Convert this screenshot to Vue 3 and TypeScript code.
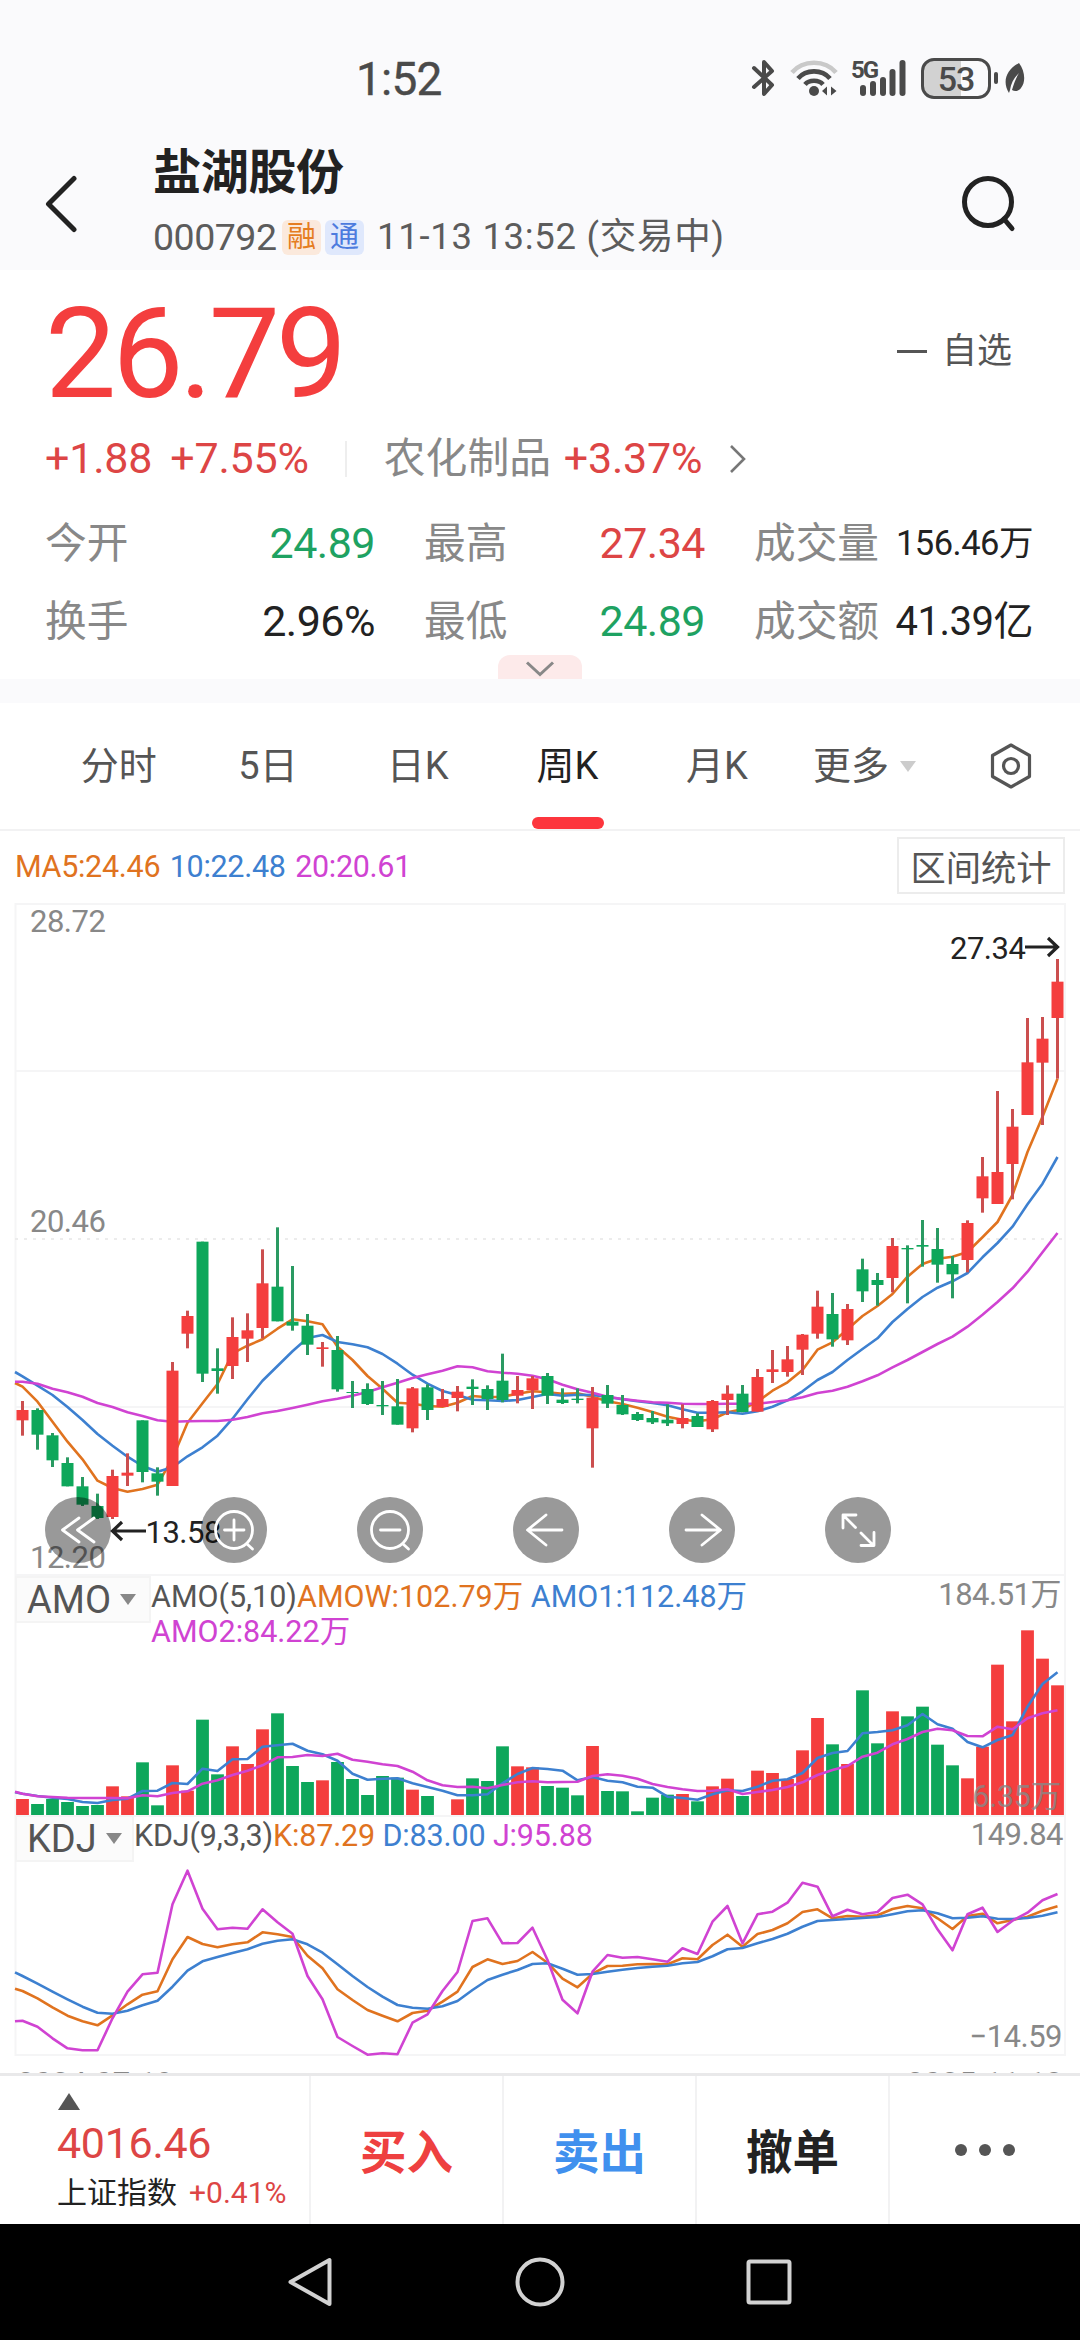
<script setup lang="ts">
type Candle = [up: 0 | 1, high: number, top: number, bottom: number, low: number]

const STEP = 15
const FIRST = 22.5
const UNIT = 3

// Weekly candles, in thirds of a pixel measured from the y = 1180 guide
const candles: Candle[] = [
  [1, 663, 690, 721, 767], [0, 685, 690, 764, 809], [0, 759, 766, 841, 861], [0, 832, 849, 919, 919],
  [0, 891, 919, 974, 978], [0, 941, 978, 1014, 1017], [1, 869, 888, 1011, 1017], [1, 820, 878, 887, 918],
  [0, 721, 721, 876, 907], [0, 862, 880, 905, 947], [1, 546, 572, 918, 918], [1, 392, 408, 461, 505],
  [0, 185, 185, 581, 606], [0, 505, 565, 573, 641], [1, 412, 471, 558, 597], [1, 400, 451, 476, 546],
  [1, 208, 310, 444, 475], [0, 142, 320, 424, 424], [0, 258, 425, 437, 452], [0, 402, 437, 494, 525],
  [1, 486, 502, 507, 560], [0, 468, 510, 628, 635], [0, 603, 636, 638, 684], [0, 610, 627, 672, 675],
  [0, 603, 675, 679, 705], [0, 597, 679, 734, 734], [1, 621, 625, 745, 757], [0, 613, 622, 690, 720],
  [1, 627, 657, 681, 681], [1, 618, 635, 654, 694], [0, 598, 620, 627, 675], [0, 616, 627, 657, 690],
  [0, 521, 602, 660, 667], [1, 588, 630, 647, 670], [1, 588, 595, 631, 687], [0, 579, 588, 647, 672],
  [0, 625, 659, 669, 672], [0, 625, 656, 660, 670], [1, 621, 653, 745, 863], [0, 615, 645, 671, 684],
  [0, 645, 675, 703, 705], [0, 696, 702, 720, 723], [0, 693, 714, 727, 732], [0, 673, 719, 730, 738],
  [1, 673, 714, 732, 745], [0, 700, 708, 741, 741], [1, 660, 663, 748, 756], [1, 616, 641, 660, 705],
  [0, 615, 641, 696, 697], [1, 567, 591, 695, 695], [1, 510, 568, 576, 609], [1, 498, 538, 576, 590],
  [1, 462, 464, 509, 585], [1, 332, 380, 461, 476], [0, 339, 402, 478, 500], [1, 372, 387, 481, 495],
  [0, 236, 268, 334, 366], [0, 279, 300, 315, 377], [1, 174, 198, 294, 337], [0, 196, 204, 208, 370],
  [0, 120, 195, 200, 260], [0, 144, 207, 254, 308], [0, 228, 252, 283, 355], [1, 121, 129, 240, 277],
  [1, -69, -11, 55, 98], [1, -267, -24, 72, 72], [1, -213, -160, -48, 58], [1, -486, -353, -195, -195],
  [1, -489, -424, -352, -165], [1, -663, -595, -486, -304],
]

// The first value of every series sits on the left edge of the plot
const ma5 = [609, 620, 665, 725, 785, 838, 902, 924, 935, 927, 914, 835, 728, 670, 612, 520, 497, 478, 446, 418, 424, 433, 500, 540, 588, 626, 668, 671, 678, 680, 668, 648, 652, 650, 641, 634, 637, 641, 640, 650, 664, 672, 683, 696, 710, 719, 724, 718, 697, 688, 665, 632, 607, 570, 509, 487, 448, 408, 378, 342, 290, 252, 236, 230, 216, 172, 126, 45, -84, -190, -304]
const ma10 = [576, 589, 617, 645, 681, 720, 762, 797, 830, 858, 875, 862, 829, 802, 767, 716, 658, 602, 558, 514, 474, 465, 486, 493, 502, 522, 551, 584, 611, 633, 645, 659, 661, 663, 660, 651, 642, 647, 644, 645, 651, 658, 664, 669, 676, 688, 698, 698, 697, 701, 694, 680, 661, 634, 600, 576, 540, 507, 475, 426, 387, 351, 323, 304, 279, 232, 189, 140, 73, 11, -69]
const ma20 = [605, 605, 611, 626, 637, 650, 669, 681, 697, 708, 721, 725, 724, 723, 723, 719, 711, 700, 693, 684, 674, 664, 656, 647, 636, 622, 608, 594, 583, 572, 559, 562, 574, 578, 581, 587, 598, 614, 628, 638, 650, 657, 662, 667, 668, 671, 672, 672, 671, 671, 671, 666, 661, 652, 639, 632, 620, 604, 586, 562, 540, 516, 492, 470, 440, 404, 366, 325, 275, 217, 159]

// Turnover bars and their averages, from the y = 1560 guide; the floor is at 765
const turnover = [717, 732, 717, 726, 738, 735, 679, 709, 607, 736, 616, 692, 479, 643, 559, 612, 508, 460, 618, 666, 661, 606, 657, 705, 648, 653, 689, 708, 765, 718, 655, 663, 559, 619, 622, 678, 683, 706, 558, 693, 694, 754, 713, 704, 702, 724, 679, 656, 708, 632, 639, 657, 571, 474, 553, 612, 391, 550, 454, 469, 440, 554, 616, 655, 560, 314, 484, 211, 296, 376]
const amo1 = [697, 701, 708, 713, 717, 726, 729, 720, 716, 693, 692, 669, 672, 626, 633, 598, 597, 560, 556, 551, 572, 583, 602, 641, 659, 656, 655, 670, 681, 692, 706, 706, 703, 670, 642, 624, 627, 632, 661, 651, 662, 667, 680, 683, 710, 714, 719, 703, 691, 693, 680, 662, 658, 639, 594, 579, 573, 520, 516, 511, 496, 462, 493, 506, 546, 562, 540, 525, 440, 372, 337]
const amo2 = [695, 701, 709, 711, 713, 714, 714, 714, 715, 706, 709, 699, 694, 671, 661, 645, 632, 616, 592, 591, 585, 588, 581, 599, 605, 613, 618, 635, 661, 676, 681, 680, 685, 675, 667, 664, 667, 666, 665, 648, 643, 647, 656, 672, 681, 688, 693, 692, 688, 702, 696, 690, 681, 667, 645, 630, 618, 590, 578, 553, 537, 516, 506, 511, 528, 529, 500, 508, 475, 460, 451]

// KDJ oscillator, from the y = 1810 guide
const kLine = [536, 543, 565, 592, 617, 634, 646, 616, 583, 554, 544, 448, 381, 402, 412, 403, 397, 367, 373, 381, 437, 475, 538, 570, 600, 617, 634, 609, 602, 575, 545, 471, 448, 462, 453, 426, 458, 506, 532, 491, 468, 467, 463, 462, 463, 445, 448, 405, 374, 410, 372, 360, 340, 306, 298, 325, 318, 320, 316, 297, 288, 295, 325, 357, 318, 311, 340, 330, 320, 302, 289]
const dLine = [487, 498, 521, 545, 568, 590, 608, 611, 602, 586, 572, 530, 482, 454, 441, 429, 418, 401, 392, 388, 403, 428, 463, 498, 531, 560, 585, 593, 596, 589, 573, 540, 510, 494, 480, 462, 460, 476, 494, 492, 485, 479, 474, 470, 467, 460, 456, 439, 418, 414, 400, 387, 371, 350, 333, 330, 327, 324, 321, 313, 304, 301, 310, 325, 323, 319, 326, 327, 324, 317, 307]
const jLine = [634, 632, 650, 685, 715, 721, 721, 625, 545, 493, 488, 283, 182, 296, 358, 353, 356, 298, 337, 371, 498, 568, 681, 708, 734, 730, 733, 638, 613, 543, 486, 333, 325, 400, 399, 353, 450, 569, 610, 485, 435, 443, 441, 448, 455, 415, 432, 335, 288, 400, 313, 305, 278, 218, 230, 319, 299, 313, 306, 264, 254, 283, 358, 421, 313, 293, 366, 332, 308, 271, 252]

const x = (i: number) => FIRST + i * STEP
const y = (base: number, v: number) => base + v / UNIT
const line = (base: number, values: number[]) =>
  values.map((v, i) => `${i === 0 ? 15 : x(i - 1)},${y(base, v).toFixed(1)}`).join(' ')

const ORANGE = '#e0731f'
const BLUE = '#3d80d0'
const PINK = '#d043d2'

const stats = [
  { label: '今开', value: '24.89', tone: 'down' },
  { label: '最高', value: '27.34', tone: 'up' },
  { label: '成交量', value: '156.46万', tone: 'small' },
  { label: '换手', value: '2.96%', tone: '' },
  { label: '最低', value: '24.89', tone: 'down' },
  { label: '成交额', value: '41.39亿', tone: 'medium' },
]

const tabs = ['分时', '5日', '日K', '周K', '月K']
const trades = [
  { name: '买入', tone: 'buy' },
  { name: '卖出', tone: 'sell' },
  { name: '撤单', tone: 'cancel' },
]
const tools = ['rewind', 'in', 'out', 'left', 'right', 'expand']
</script>

<template>
  <div class="screen">
    <header class="top">
      <div class="status">
        <span class="clock">1:52</span>
        <div class="status-icons">
          <svg class="bt" width="28" height="40" viewBox="0 0 28 40" fill="none" stroke="#4a4a4a" stroke-width="4" stroke-linecap="round" stroke-linejoin="round">
            <path d="M4 10 L22 27 L14 36 L14 4 L22 13 L4 29" />
          </svg>
          <svg class="wifi" width="50" height="40" viewBox="0 0 50 40" fill="none" stroke-width="4.6" stroke="#4a4a4a">
            <path d="M3 14.5 C14 1.500 36 1.500 47 14.500" stroke="#c9c9c9" />
            <path d="M9 20.500 C17 11 33 11 41 20.500" />
            <path d="M16 26.500 C20 21.500 30 21.500 34 26.500" />
            <circle cx="25" cy="33" r="5" fill="#4a4a4a" stroke="none" />
            <path d="M33 33 L38 28.500 V37.500 Z M47.500 33 L42 28.500 V37.500 Z" fill="#4a4a4a" stroke="none" />
          </svg>
          <div class="signal">
            <span class="g5">5G</span>
            <svg width="54" height="40" viewBox="0 0 54 40" fill="#4a4a4a">
              <rect x="8" y="27" width="6" height="11" rx="3" />
              <rect x="18" y="23" width="6" height="15" rx="3" />
              <rect x="28" y="19" width="6" height="19" rx="3" />
              <rect x="37.500" y="11" width="6" height="27" rx="3" />
              <rect x="47.500" y="2" width="6" height="36" rx="3" />
            </svg>
          </div>
          <div class="battery">53</div>
          <i class="nub"></i>
          <svg class="leaf" width="22" height="32" viewBox="0 0 22 32" fill="#4a4a4a">
            <path d="M15 1 C21 9 22 20 17 26 C15 29 11 30 8 28 C10 21 12 16 15 11 C10 16 7 21 6 28 L5 31 C-2 20 2 8 15 1 Z" />
          </svg>
        </div>
      </div>
      <div class="heading">
        <svg class="back" width="40" height="60" viewBox="0 0 40 60" fill="none" stroke="#222" stroke-width="5" stroke-linecap="round" stroke-linejoin="round">
          <path d="M33 5.500 L7.500 31 L33 56.500" />
        </svg>
        <div class="names">
          <h1>盐湖股份</h1>
          <div class="meta">
            <span class="code">000792</span>
            <b class="badge margin">融</b>
            <b class="badge connect">通</b>
            <span class="when">11-13 13:52 (交易中)</span>
          </div>
        </div>
        <svg class="search" width="60" height="60" viewBox="0 0 60 60" fill="none" stroke="#222" stroke-width="5" stroke-linecap="round">
          <circle cx="30" cy="29" r="23.500" />
          <path d="M46 46 L54 55.500" />
        </svg>
      </div>
    </header>

    <section class="quote">
      <div class="price-row">
        <strong>26.79</strong>
        <div class="fav"><i></i>自选</div>
      </div>
      <div class="change">
        <span class="delta">+1.88</span>
        <span class="pct">+7.55%</span>
        <i></i>
        <span class="sector">农化制品</span>
        <span class="delta">+3.37%</span>
        <svg width="20" height="30" viewBox="0 0 20 30" fill="none" stroke="#777" stroke-width="2.600"><path d="M3 2 L16 15 L3 28" /></svg>
      </div>
      <div class="stats">
        <div v-for="s in stats" :key="s.label" class="stat">
          <span>{{ s.label }}</span><b :class="s.tone">{{ s.value }}</b>
        </div>
      </div>
      <div class="pull">
        <svg width="30" height="18" viewBox="0 0 30 18" fill="none" stroke="#888" stroke-width="3"><path d="M2 2.500 L15 14.500 L28 2.500" /></svg>
      </div>
    </section>

    <nav class="tabs">
      <span v-for="t in tabs" :key="t" class="tab" :class="{ on: t === '周K' }">{{ t }}</span>
      <span class="more">更多<i></i></span>
      <svg width="44" height="48" viewBox="0 0 44 48" fill="none" stroke="#555" stroke-width="3.200" stroke-linejoin="round">
        <path d="M22 3 L40.500 13.500 V34.500 L22 45 L3.500 34.500 V13.500 Z" />
        <circle cx="22" cy="24" r="7.500" />
      </svg>
    </nav>

    <div class="ma">
      <div class="legend">
        <span class="orange">MA5:24.46</span><span class="blue">10:22.48</span><span class="pink">20:20.61</span>
      </div>
      <button class="range">区间统计</button>
    </div>

    <section class="pane main">
      <svg width="1080" height="673" viewBox="0 903 1080 673">
        <g stroke="#f5f5f6" stroke-width="2" fill="none">
          <path d="M15 904 H1066 M15 1071 H1065 M15 1407 H1065 M15 1575 H1066 M15.500 903 V1576 M1065 903 V1576" />
          <path d="M15 1239 H1065" stroke="#ececec" stroke-dasharray="3 6" />
        </g>
        <g class="gray">
          <text x="30" y="932">28.72</text>
          <text x="30" y="1232">20.46</text>
          <text x="30" y="1568">12.20</text>
        </g>
        <g fill="none" stroke-width="2.600" stroke-linejoin="round">
          <polyline :points="line(1180, ma5)" :stroke="ORANGE" />
          <polyline :points="line(1180, ma10)" :stroke="BLUE" />
          <polyline :points="line(1180, ma20)" :stroke="PINK" />
        </g>
        <g v-for="(c, i) in candles" :key="i">
          <rect :x="x(i) - 1.5" :y="y(1180, c[1])" width="3" :height="(c[4] - c[1]) / UNIT" :fill="c[0] ? '#cb4f4f' : '#2a9a62'" />
          <rect :x="x(i) - 6" :y="y(1180, c[2])" width="12" :height="Math.max(1, (c[3] - c[2]) / UNIT)" :fill="c[0] ? '#f43e3e' : '#0ea75b'" />
        </g>
        <g fill="none" stroke="#222" stroke-width="3.200">
          <path d="M1025 947 H1057 M1048 938 L1057.500 947 L1048 956" />
          <path d="M146 1531 H113 M122 1522 L112.500 1531 L122 1540" />
        </g>
        <text x="950" y="959">27.34</text>
        <text x="145.500" y="1543">13.58</text>
      </svg>
      <div class="tools">
        <button v-for="t in tools" :key="t">
          <svg width="66" height="66" viewBox="0 0 66 66" fill="none" stroke="#fff" stroke-width="2.800" stroke-linecap="round" stroke-linejoin="round">
            <path v-if="t === 'rewind'" d="M34 21 L17.500 33 L34 45 M49 21 L32.500 33 L49 45" />
            <template v-else-if="t === 'in' || t === 'out'">
              <circle cx="33" cy="33" r="18.500" />
              <path d="M23.500 33 H43 M46 47 L51.500 52" />
              <path v-if="t === 'in'" d="M33 23 V43" />
            </template>
            <path v-else-if="t === 'left'" d="M33 18 L14.500 33 L33 48 M15 33 H49" />
            <path v-else-if="t === 'right'" d="M33 18 L51.500 33 L33 48 M51 33 H17" />
            <path v-else d="M18 31 V18 H31 M18.500 18.500 L30.500 30.500 M36 36 L48 48 M49 35.500 V48.500 H36" />
          </svg>
        </button>
      </div>
    </section>

    <section class="pane amo">
      <svg width="1080" height="239" viewBox="0 1576 1080 239">
        <path d="M15.500 1576 V1815 M1065 1576 V1815" stroke="#f5f5f6" stroke-width="2" />
        <rect
          v-for="(v, i) in turnover" :key="i"
          :x="x(i) - 6.400" :y="y(1560, v)" width="12.800" :height="(765 - v) / UNIT"
          :fill="candles[i][0] ? '#f43e3e' : '#0ea75b'"
        />
        <g fill="none" stroke-width="2.600" stroke-linejoin="round">
          <polyline :points="line(1560, amo1)" :stroke="BLUE" />
          <polyline :points="line(1560, amo2)" :stroke="PINK" />
        </g>
        <g class="gray end">
          <text x="1061" y="1605">184.51万</text>
          <text x="1061" y="1807" opacity=".8">6.35万</text>
        </g>
      </svg>
      <div class="caption">
        <span class="pick">AMO<i></i></span>
        <p>
          AMO(5,10)<span class="orange">AMOW:102.79万</span> <span class="blue">AMO1:112.48万</span><br />
          <span class="pink">AMO2:84.22万</span>
        </p>
      </div>
    </section>

    <section class="pane kdj">
      <svg width="1080" height="242" viewBox="0 1815 1080 242">
        <path d="M15.500 1815 V2055 H1065 V1815 M15 1816 H1066" stroke="#f5f5f6" stroke-width="2" fill="none" />
        <g fill="none" stroke-width="2.600" stroke-linejoin="round">
          <polyline :points="line(1810, kLine)" :stroke="ORANGE" />
          <polyline :points="line(1810, dLine)" :stroke="BLUE" />
          <polyline :points="line(1810, jLine)" :stroke="PINK" />
        </g>
        <g class="gray end">
          <text x="1063" y="1845">149.84</text>
          <text x="1062" y="2047">−14.59</text>
        </g>
      </svg>
      <div class="caption">
        <span class="pick">KDJ<i></i></span>
        <p>KDJ(9,3,3)<span class="orange">K:87.29</span> <span class="blue">D:83.00</span> <span class="pink">J:95.88</span></p>
      </div>
    </section>

    <div class="dates"><span>2024-07-19</span><span>2025-11-13</span></div>

    <footer class="actions">
      <div class="index">
        <i></i>
        <strong>4016.46</strong>
        <div><span>上证指数</span><em>+0.41%</em></div>
      </div>
      <button v-for="t in trades" :key="t.name" :class="t.tone">{{ t.name }}</button>
      <div class="dots"><i></i><i></i><i></i></div>
    </footer>

    <div class="system">
      <svg width="60" height="60" viewBox="0 0 60 60"><path d="M48.500 8 V52 L9.500 30 Z" /></svg>
      <svg width="60" height="60" viewBox="0 0 60 60"><circle cx="30" cy="30" r="22.500" /></svg>
      <svg width="60" height="60" viewBox="0 0 60 60"><rect x="9.500" y="9.500" width="41" height="41" rx="1.500" /></svg>
    </div>
  </div>
</template>

<style>
body { background: #fff; }
</style>

<style scoped>
.screen {
  width: 1080px;
  height: 2340px;
  overflow: hidden;
  display: flex;
  flex-direction: column;
  background: #fff;
  color: #222;
  font-family: Roboto, "Noto Sans CJK SC", sans-serif;
  line-height: 1.2;
}
.screen > * { flex: none; box-sizing: border-box; }
svg { display: block; flex: none; }
i, em { font-style: normal; }
button { border: 0; background: none; padding: 0; font-family: inherit; }
.orange { color: #e0731f; }
.blue { color: #3d80d0; }
.pink { color: #d043d2; }

.top { height: 270px; background: #fafafc; }
.status {
  height: 118px;
  padding: 38px 54px 0 356px;
  box-sizing: border-box;
  display: flex;
  justify-content: space-between;
  align-items: center;
  color: #4a4a4a;
}
.clock { font-size: 46px; line-height: 80px; letter-spacing: -.8px; padding-top: 2px; -webkit-text-stroke: .4px #4a4a4a; }
.status-icons { display: flex; align-items: center; }
.wifi { margin-left: 11px; }
.signal { width: 54px; margin-left: 13px; position: relative; }
.g5 { position: absolute; left: -1px; top: 1px; font-size: 24px; font-weight: 700; line-height: 22px; letter-spacing: -2px; }
.battery {
  width: 70px;
  height: 41px;
  margin-left: 15px;
  box-sizing: border-box;
  border: 3px solid #4a4a4a;
  border-radius: 13px;
  background: linear-gradient(90deg, #d2d2d2 58%, transparent 58%);
  text-align: center;
  font-size: 34px;
  font-weight: 500;
  line-height: 36px;
  letter-spacing: -1px;
}
.nub { width: 4px; height: 12px; margin: 0 6px 0 3px; background: #4a4a4a; border-radius: 2px; }
.heading { height: 152px; padding: 0 62px 0 41px; display: flex; }
.back, .search { margin-top: 55px; }
.names { flex: 1; margin-left: 72px; }
h1 { margin: 24px 0 0; font-size: 48px; line-height: 62px; font-weight: 700; letter-spacing: -.3px; }
.meta { display: flex; align-items: center; height: 50px; margin-top: 8px; color: #5c5c5c; font-size: 37.5px; white-space: nowrap; }
.code { letter-spacing: -.5px; width: 129px; }
.badge { width: 39px; height: 35px; margin-right: 4px; border-radius: 6px; font-size: 29px; line-height: 34px; font-weight: 400; text-align: center; }
.margin { background: #fbe9dc; color: #e57d22; }
.connect { background: #dfe8fc; color: #4c7bde; }
.when { margin-left: 9px; font-size: 36.5px; letter-spacing: .7px; }

.quote { height: 409px; display: flex; flex-direction: column; }
.price-row { height: 154px; padding: 0 68px 0 45px; display: flex; justify-content: space-between; color: #f43e3e; }
.price-row strong { font-size: 127px; font-weight: 400; line-height: 167px; letter-spacing: -4.2px; }
.fav { display: flex; align-items: center; height: 163px; color: #555; font-size: 35px; }
.fav i { width: 30px; height: 3px; margin: 0 15px 0 0; background: #555; }
.change { height: 70px; padding-left: 45px; display: flex; align-items: center; color: #dd4545; font-size: 43px; letter-spacing: -.2px; }
.pct { margin-left: 18px; }
.change i { width: 2px; height: 36px; margin: 0 37px 0 36px; background: #eee; }
.sector { width: 180px; font-size: 41.800px; letter-spacing: 0; color: #888; white-space: nowrap; }
.change svg { margin-left: 26px; }
.stats { height: 161px; padding: 11px 46px 0 45px; box-sizing: border-box; display: grid; grid-template-columns: 330px 281px 279px; column-gap: 49px; grid-auto-rows: 78px; }
.stat { display: flex; justify-content: space-between; align-items: center; white-space: nowrap; height: 78px; }
.stat span { color: #888; font-size: 41.700px; }
.stat b { font-weight: 400; font-size: 43px; letter-spacing: -.5px; }
.stat .up { color: #dd4545; }
.stat .down { color: #1ea262; }
.stat .small { font-size: 34.500px; }
.stat .medium { font-size: 40px; }
.pull { width: 84px; height: 24px; align-self: center; background: #fdeaea; border-radius: 12px 12px 0 0; display: flex; justify-content: center; padding-top: 5px; box-sizing: border-box; }

.tabs { height: 152px; border-top: 24px solid #fafafc; border-bottom: 2px solid #f2f2f3; padding: 0 47px; display: flex; align-items: center; font-size: 38px; color: #555; }
.tab { width: 150px; height: 126px; line-height: 126px; text-align: center; position: relative; }
.tabs .tab:first-child { width: 144px; margin-right: 2.500px; }
.tab.on { color: #222; }
.tab.on::after { content: ""; position: absolute; left: 39px; bottom: 0; width: 72px; height: 12px; border-radius: 6px; background: #fd353d; }
.more { display: flex; align-items: center; margin-left: 21px; width: 176.500px; padding-top: 1px; }
.more i { margin-left: 11px; border: 8px solid transparent; border-top: 11px solid #ccc; border-bottom: 0; }

.ma { height: 72px; padding: 6px 15px 9px; display: flex; justify-content: space-between; }
.legend { display: flex; align-items: center; height: 60px; gap: 9.500px; font-size: 30.500px; letter-spacing: -.3px; }
.range { width: 168px; height: 57px; border: 2px solid #ececec; font-size: 35.300px; line-height: 50px; padding-top: 5px; color: #555; }

.pane { position: relative; }
.main { height: 673px; }
.amo { height: 239px; }
.kdj { height: 242px; }
.pane text { font-size: 31px; letter-spacing: -.5px; fill: #222; }
.pane .gray text { fill: #888; }
.pane .end text { text-anchor: end; }
.tools { position: absolute; left: 45px; top: 594px; display: flex; gap: 90px; }
.tools button { width: 66px; height: 66px; border-radius: 50%; background: rgba(0, 0, 0, .4); }
.caption { position: absolute; left: 15px; top: 0; display: flex; color: #555; }
.pick { height: 47px; width: 136px; box-sizing: border-box; padding: 3px 0 0 10px; border: 2px solid #f4f4f4; background: #fbfbfb; display: flex; align-items: center; font-size: 38px; }
.pick i { margin: -3px 0 0 9px; border: 8.500px solid transparent; border-top: 11px solid #888; border-bottom: 0; }
.kdj .pick { width: 119px; }
.caption p { margin: 3px 0 0; font-size: 30.500px; line-height: 35px; letter-spacing: 0; white-space: nowrap; }
.kdj .caption p { letter-spacing: -.15px; }

.dates { height: 16px; padding: 9px 17px 0; overflow: hidden; display: flex; justify-content: space-between; color: #888; font-size: 31px; line-height: 36px; }

.actions { height: 151px; border-top: 3px solid #e9e9ea; display: flex; }
.index { width: 309px; padding: 17px 0 0 57px; box-sizing: border-box; white-space: nowrap; }
.index > i { display: block; width: 0; border: 11px solid transparent; border-bottom: 17px solid #555; border-top: 0; margin-left: 1px; }
.index strong { display: block; margin-top: 7px; font-size: 43px; line-height: 52px; font-weight: 400; letter-spacing: -.3px; color: #dd4545; }
.index div { display: flex; align-items: center; height: 44px; margin-top: 2px; font-size: 30px; }
.index em { margin-left: 12px; color: #dd4545; }
.actions button { width: 193px; border-left: 2px solid #f2f2f3; font-size: 46.500px; font-weight: 700; line-height: 1; padding-top: 7px; }
.buy { color: #ee4040; }
.sell { color: #4090ee; }
.cancel { color: #222; }
.dots { flex: 1; border-left: 2px solid #f2f2f3; display: flex; justify-content: center; align-items: center; gap: 12px; }
.dots i { width: 12px; height: 12px; border-radius: 50%; background: #555; }

.system { height: 116px; background: #000; display: flex; justify-content: center; align-items: center; gap: 169px; }
.system svg { fill: none; stroke: #d2d2d2; stroke-width: 4; stroke-linejoin: round; }
</style>
